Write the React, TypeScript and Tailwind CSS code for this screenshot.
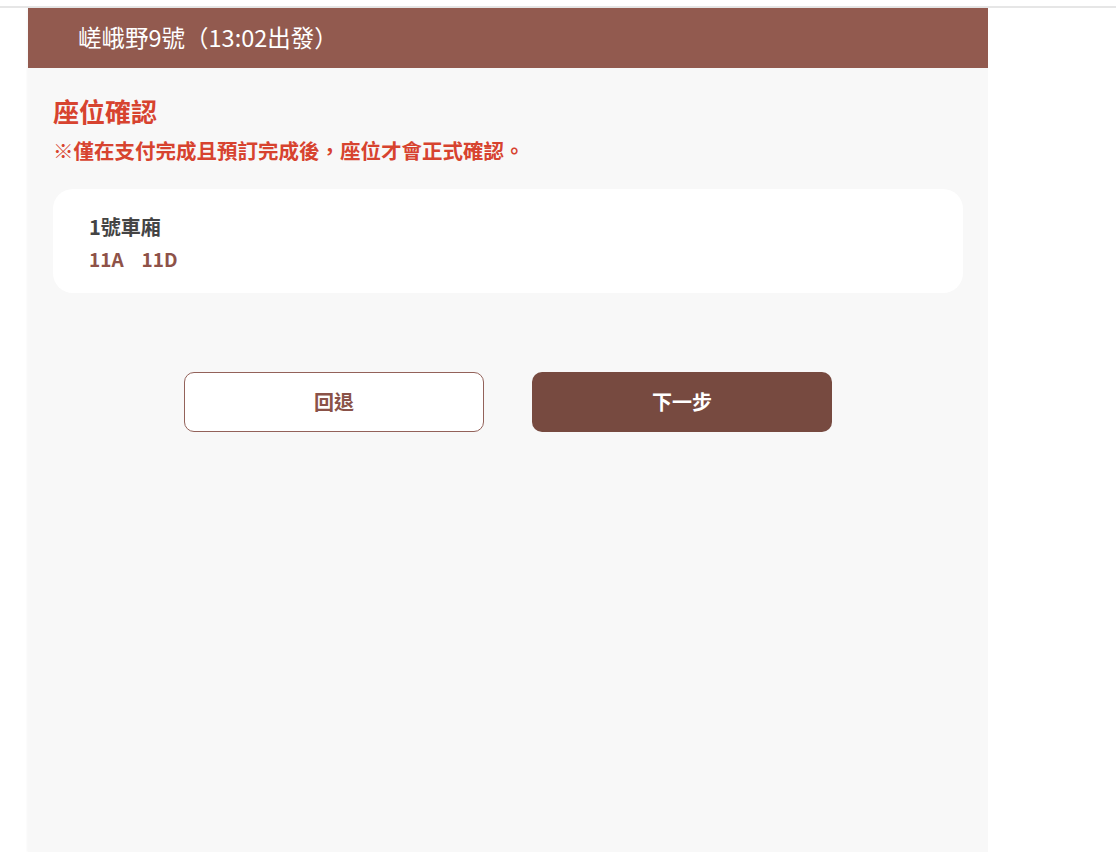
import React from "react";

const seats = ["11A", "11D"];

export default function App() {
  return (
    <div
      className="min-h-screen bg-white pt-[6px]"
      style={{ fontFamily: '"Noto Sans CJK TC", "Noto Sans", sans-serif' }}
    >
      <div className="border-t-2 border-[#e6e6e6]">
        <div className="ml-[28px] flex min-h-[844px] w-[960px] flex-col bg-[#f8f8f8] shadow-[-1px_0_2px_rgba(0,0,0,0.04)]">
          {/* 列車標題 */}
          <header className="flex h-[60px] items-center bg-[#925a4f] pl-[50px]">
            <h1 className="text-[23.5px] text-white">嵯峨野9號（13:02出發）</h1>
          </header>

          <main className="px-[25px] pt-[26px]">
            <h2 className="text-[26px] font-bold leading-[34px] text-[#d7432f]">座位確認</h2>
            <p className="mt-[8px] text-[20.5px] font-bold leading-[28px] text-[#d7432f]">
              ※僅在支付完成且預訂完成後，座位才會正式確認。
            </p>

            {/* 座位卡片 */}
            <div className="mt-[25px] h-[104px] rounded-[20px] bg-white px-[36px] pt-[24px]">
              <div className="text-[20px] font-bold leading-[28px] text-[#444444]">1號車廂</div>
              <div className="mt-[4px] flex gap-[18px] text-[19px] font-bold leading-[28px] text-[#8e5248]">
                {seats.map((s) => (
                  <span key={s}>{s}</span>
                ))}
              </div>
            </div>

            <div className="mt-[79px] flex justify-center gap-[48px]">
              <button className="h-[60px] w-[300px] rounded-[10px] border border-[#93625a] bg-white text-[20px] font-bold text-[#8a5248]">
                回退
              </button>
              <button className="h-[60px] w-[300px] rounded-[10px] bg-[#774a40] text-[20px] font-bold text-white">
                下一步
              </button>
            </div>
          </main>
        </div>
      </div>
    </div>
  );
}
